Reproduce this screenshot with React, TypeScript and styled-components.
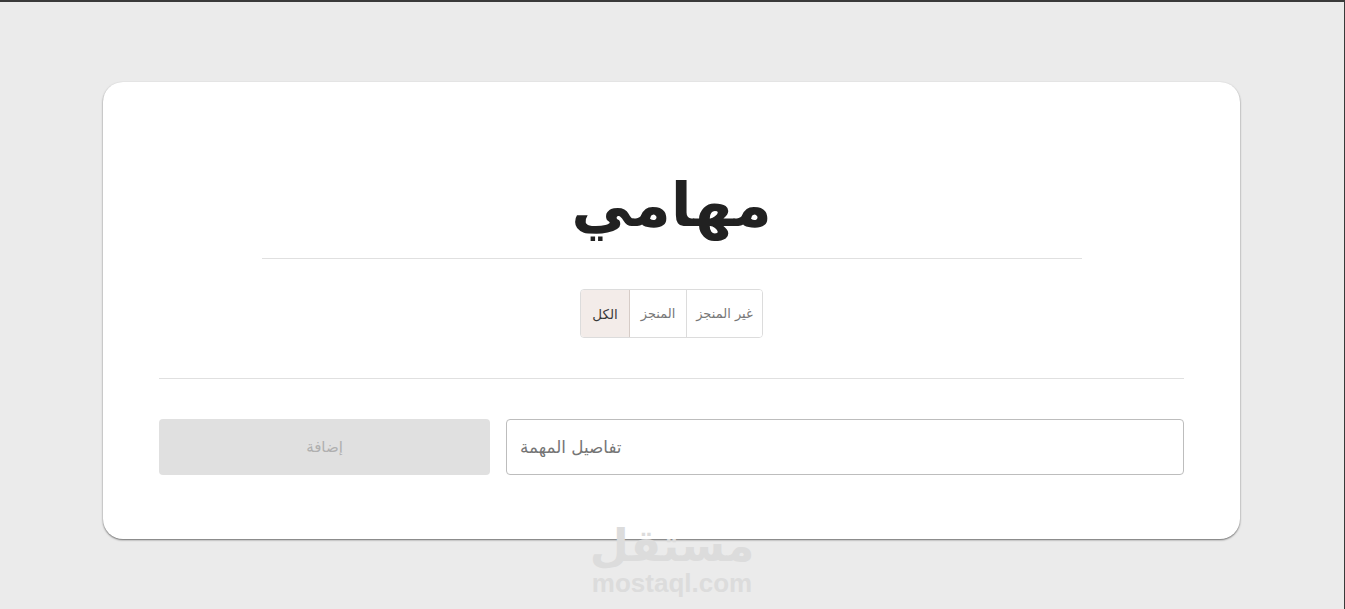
import styled, { createGlobalStyle } from 'styled-components'

const GlobalStyle = createGlobalStyle`
  html, body {
    margin: 0;
    padding: 0;
    height: 100%;
    overflow: hidden;
  }
  body {
    background: #ebebeb;
    font-family: "DejaVu Sans", "Liberation Sans", sans-serif;
  }
`

const Page = styled.div`
  box-sizing: border-box;
  position: relative;
  width: 1345px;
  height: 609px;
  padding: 80px 0 0 103px;
  border-top: 2px solid #3a3a3a;
  border-right: 1px solid #3a3a3a;
`

const Card = styled.main`
  box-sizing: border-box;
  direction: rtl;
  width: 1137px;
  height: 457px;
  padding: 80px 56px 0;
  background: #fff;
  border-radius: 20px;
  box-shadow: 0 1px 2px rgba(0, 0, 0, 0.55);
  display: flex;
  flex-direction: column;
  align-items: center;
`

const Title = styled.h1`
  box-sizing: border-box;
  width: 820px;
  height: 97px;
  margin: 0;
  border-bottom: 1px solid #e0e0e0;
  text-align: center;
  font-size: 61px;
  line-height: 86px;
  font-weight: 700;
  color: #212121;
`

const Tabs = styled.div`
  box-sizing: border-box;
  display: flex;
  height: 49px;
  margin-top: 30px;
  border: 1px solid #dcdcdc;
  border-radius: 4px;
  overflow: hidden;
`

const Tab = styled.button<{ $w: number }>`
  box-sizing: border-box;
  width: ${(p) => p.$w}px;
  padding: 0;
  border: 0;
  border-left: 1px solid #dcdcdc;
  background: #fff;
  color: #777;
  font-family: inherit;
  font-size: 13px;
  line-height: 46px;
`

const NextToActiveTab = styled(Tab)`
  border-left-color: #d6ccc7;
`

const ActiveTab = styled(Tab)`
  border-left: 0;
  background: #f3ece9;
  color: #3a3a3a;
  font-size: 13.5px;
`

const Rule = styled.hr`
  width: 100%;
  margin: 40px 0;
  border: 0;
  border-top: 1px solid #e0e0e0;
`

const Form = styled.form`
  width: 100%;
  display: flex;
  gap: 16px;
`

const Input = styled.input`
  box-sizing: border-box;
  width: 678px;
  height: 56px;
  padding: 0 13px;
  border: 1px solid #bdbdbd;
  border-radius: 4px;
  font-family: inherit;
  font-size: 16.8px;
  text-align: left;
  background: #fff;
  outline: none;

  &::placeholder {
    color: #757575;
    opacity: 1;
  }
`

const AddButton = styled.button`
  flex: 1;
  height: 56px;
  border: 0;
  border-radius: 4px;
  background: #e0e0e0;
  color: #afafaf;
  font-family: inherit;
  font-size: 15px;
`

const Watermark = styled.div`
  position: absolute;
  left: 592px;
  top: 520px;
  width: 160px;
  display: flex;
  flex-direction: column;
  align-items: center;
  color: #dcdcdc;
  pointer-events: none;
`

const WatermarkArabic = styled.span`
  font-size: 45px;
  line-height: 48px;
  height: 48px;
  font-weight: 700;
`

const WatermarkLatin = styled.span`
  font-family: "Liberation Sans", Arial, sans-serif;
  font-size: 26px;
  line-height: 26px;
  font-weight: 700;
`

export default function App() {
  return (
    <Page>
      <GlobalStyle />
      <Card>
        <Title>مهامي</Title>
        <Tabs>
          <Tab $w={76}>غير المنجز</Tab>
          <NextToActiveTab $w={57}>المنجز</NextToActiveTab>
          <ActiveTab $w={48}>الكل</ActiveTab>
        </Tabs>
        <Rule />
        <Form onSubmit={(e) => e.preventDefault()}>
          <Input placeholder="تفاصيل المهمة" />
          <AddButton type="button" disabled>
            إضافة
          </AddButton>
        </Form>
      </Card>
      <Watermark>
        <WatermarkArabic>مستقل</WatermarkArabic>
        <WatermarkLatin>mostaql.com</WatermarkLatin>
      </Watermark>
    </Page>
  )
}
